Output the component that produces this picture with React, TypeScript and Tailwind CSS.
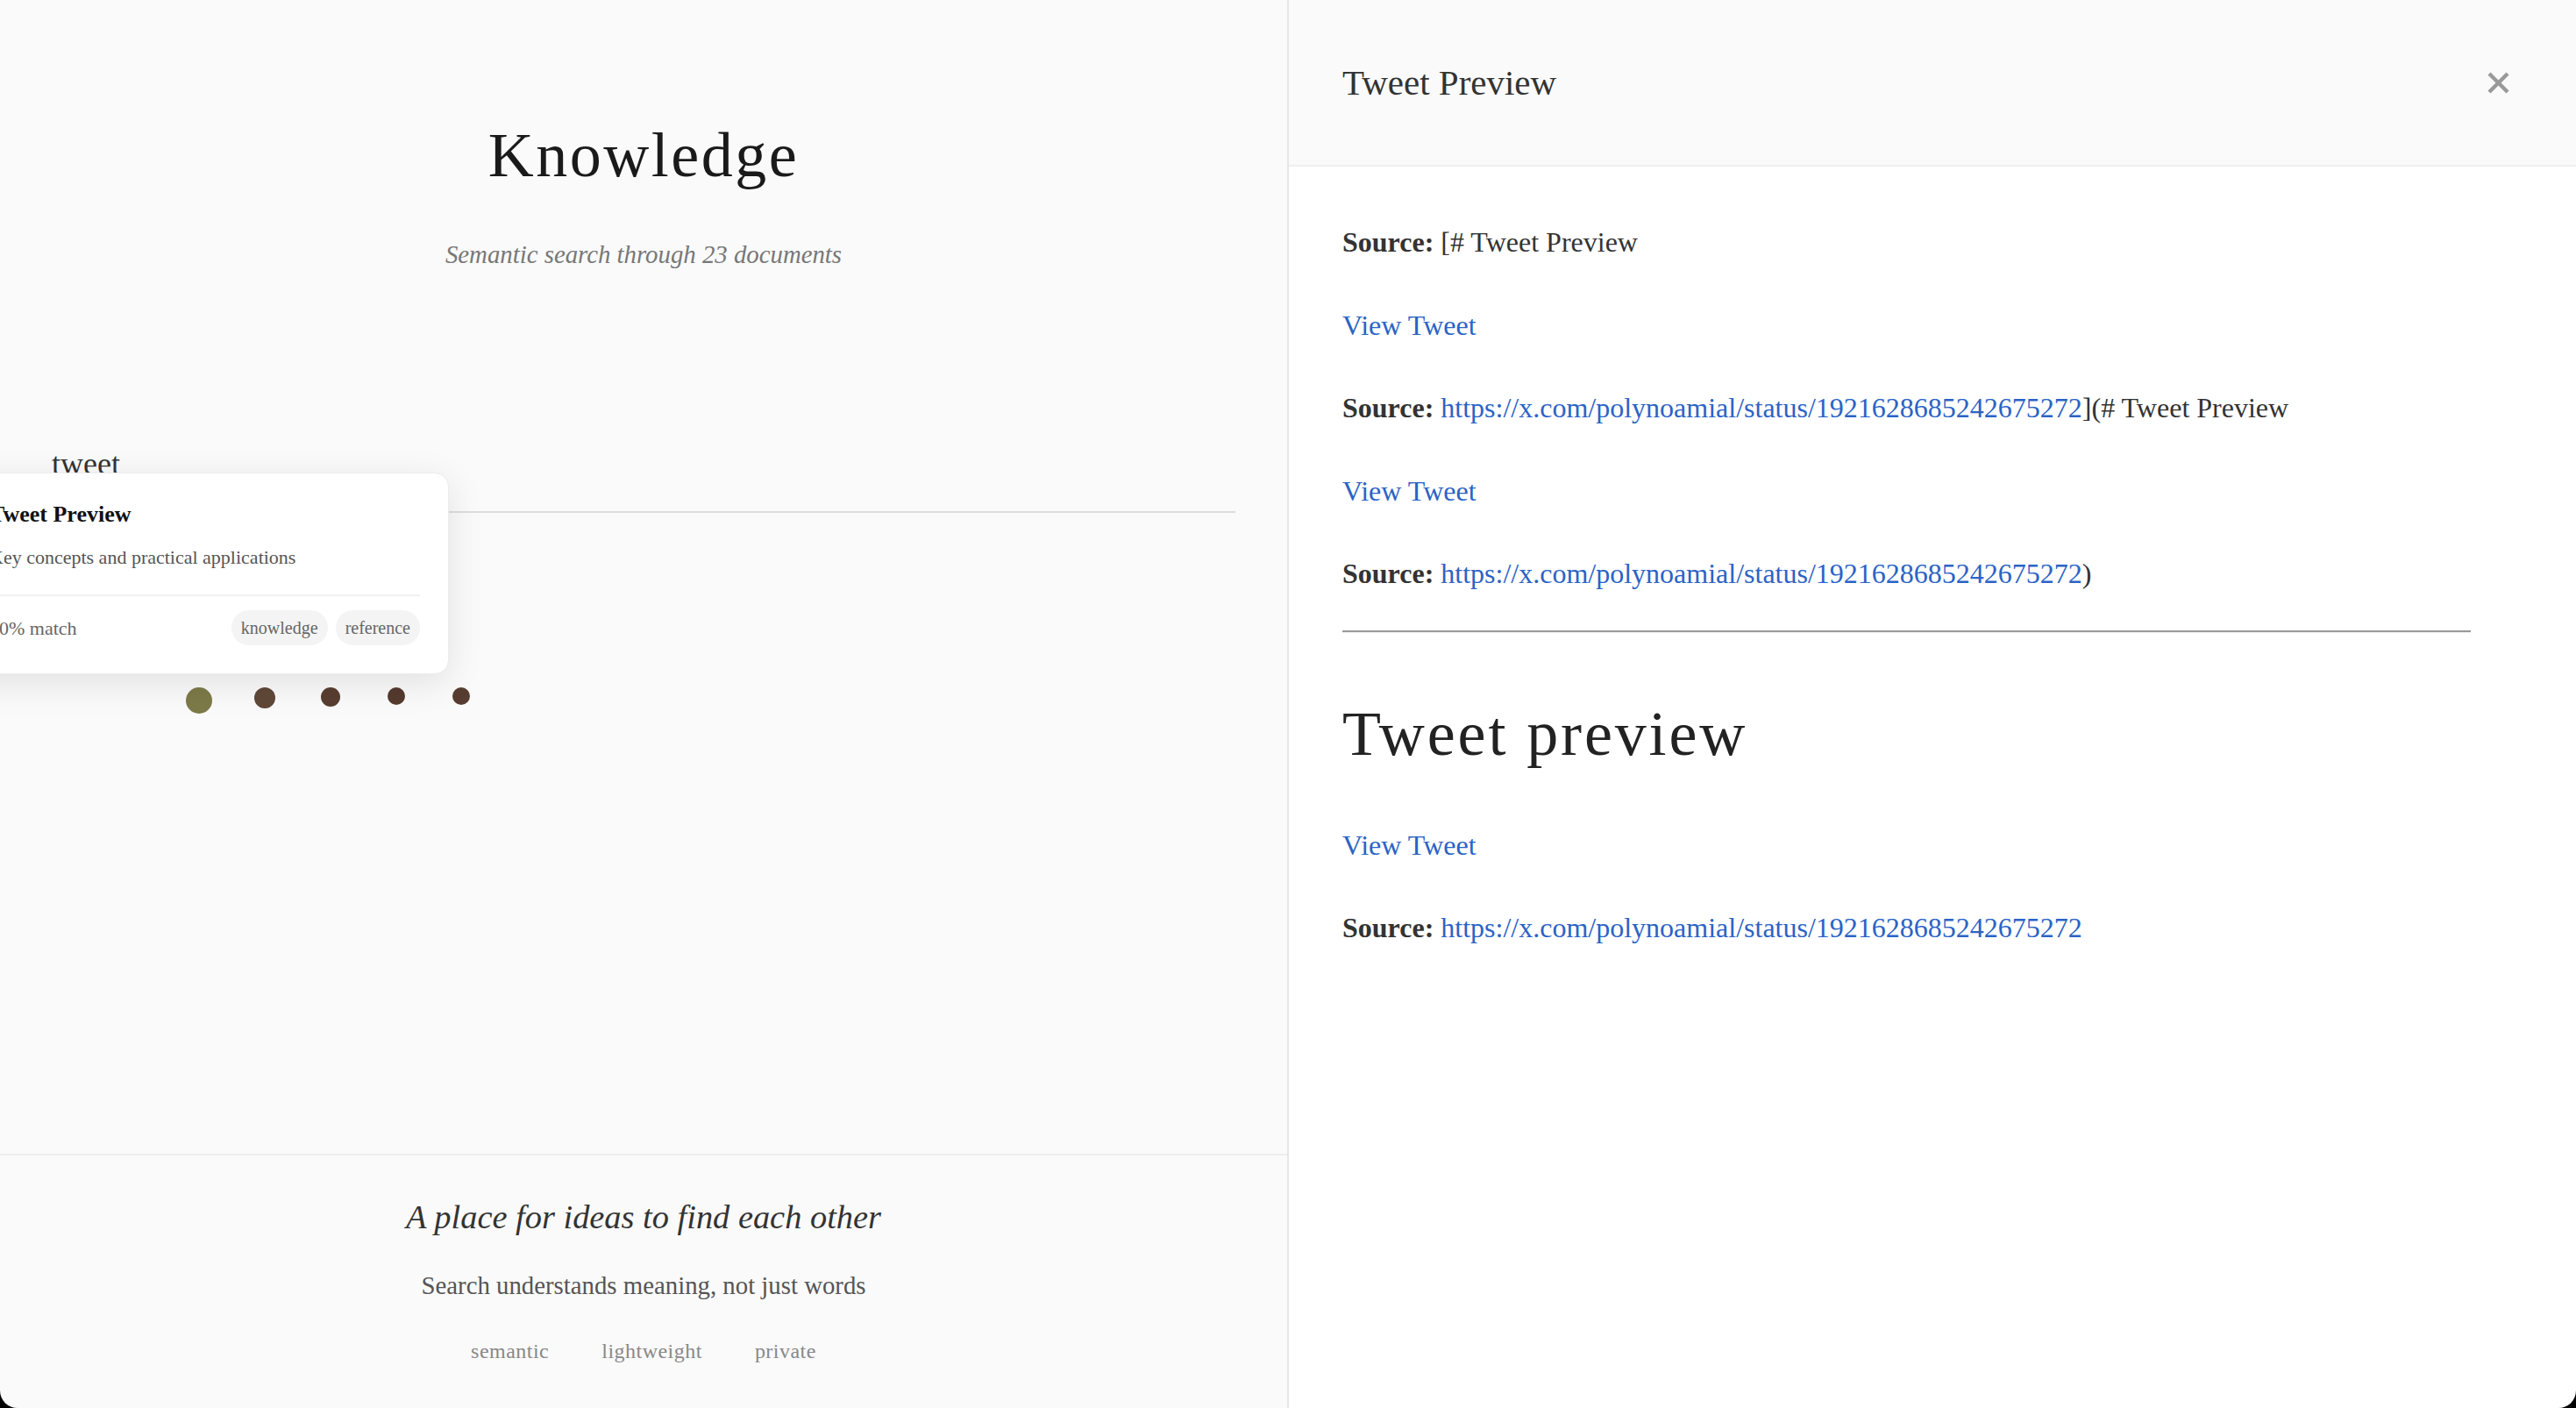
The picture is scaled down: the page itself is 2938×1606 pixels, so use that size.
import React from "react";

const dots = [
  { size: 30, color: "#7c7a48" },
  { size: 24, color: "#5f4838" },
  { size: 22, color: "#583e30" },
  { size: 20, color: "#553a2e" },
  { size: 20, color: "#573d31" },
];

const URL = "https://x.com/polynoamial/status/1921628685242675272";

function Link({ children }: { children: React.ReactNode }) {
  return <a className="text-[#2b63c6] no-underline">{children}</a>;
}

function Source({ children }: { children: React.ReactNode }) {
  return (
    <>
      <strong className="font-bold">Source:</strong> {children}
    </>
  );
}

export default function App() {
  return (
    <div className="h-screen w-full bg-black font-['Liberation_Serif','Times_New_Roman',serif]">
      <div className="flex h-full w-full overflow-hidden rounded-b-[20px]">
        {/* Left panel */}
        <section className="relative flex h-full w-[1470px] shrink-0 flex-col border-r-2 border-[#e6e6e6] bg-[#fafafa]">
          <div className="flex-1 pt-[136px]">
            <h1 className="text-center text-[72px] font-normal leading-[83px] tracking-[0.035em] text-[#1a1a1a]">
              Knowledge
            </h1>
            <p className="mt-[55px] text-center text-[28.8px] italic leading-[33px] text-[#777777]">
              Semantic search through 23 documents
            </p>
            <div className="mx-[59px] mt-[202px]">
              <div className="border-b-2 border-[#dddddd] pb-[33px] text-[36px] leading-[41px] text-[#333333]">
                tweet
              </div>
              <div className="ml-[131px] mt-[199px] flex items-start">
                {dots.map((d, i) => (
                  <div key={i} className="flex w-[74.75px] justify-center">
                    <span
                      className="block rounded-full"
                      style={{ width: d.size, height: d.size, backgroundColor: d.color }}
                    />
                  </div>
                ))}
              </div>
            </div>
          </div>

          <footer className="border-t-2 border-[#eeeeee] pb-[51px] pt-[48px] text-center">
            <p className="text-[38.4px] italic leading-[44px] text-[#333333]">
              A place for ideas to find each other
            </p>
            <p className="mt-[40px] text-[28.8px] leading-[33px] text-[#555555]">
              Search understands meaning, not just words
            </p>
            <div className="mt-[44px] flex justify-center gap-[60px] text-[24px] leading-[28px] tracking-[0.02em] text-[#888888]">
              <span>semantic</span>
              <span>lightweight</span>
              <span>private</span>
            </div>
          </footer>

          {/* Hover preview card */}
          <div className="absolute left-[-45px] top-[539px] w-[557px] rounded-[16px] border border-[#ececec] bg-white p-[32px] shadow-[0_10px_40px_rgba(0,0,0,0.10)]">
            <div className="text-[26px] font-bold leading-[30px] text-[#111111]">Tweet Preview</div>
            <div className="mt-[21px] text-[22px] leading-[25px] text-[#555555]">
              Key concepts and practical applications
            </div>
            <div className="mt-[30px] flex items-center justify-between border-t-2 border-[#f0f0f0] pt-[16px]">
              <span className="text-[22px] leading-[25px] text-[#666666]">40% match</span>
              <div className="flex gap-[9px]">
                <span className="flex h-[40px] items-center rounded-full bg-[#f4f4f4] px-[11px] text-[20px] text-[#666666]">
                  knowledge
                </span>
                <span className="flex h-[40px] items-center rounded-full bg-[#f4f4f4] px-[11px] text-[20px] text-[#666666]">
                  reference
                </span>
              </div>
            </div>
          </div>
        </section>

        {/* Right panel */}
        <section className="flex h-full flex-1 flex-col bg-white">
          <header className="flex h-[190px] shrink-0 items-center justify-between border-b-2 border-[#eeeeee] bg-[#fafafa] pl-[61px] pr-[76px]">
            <h2 className="text-[41px] font-normal leading-[46px] text-[#333333]">Tweet Preview</h2>
            <button className="flex h-[25px] w-[25px] items-center justify-center">
              <svg width="25" height="25" viewBox="0 0 25 25">
                <line x1="2" y1="2" x2="23" y2="23" stroke="#999999" strokeWidth="4.5" />
                <line x1="23" y1="2" x2="2" y2="23" stroke="#999999" strokeWidth="4.5" />
              </svg>
            </button>
          </header>
          <div className="pl-[61px] pt-[61px]">
            <div className="w-[1287px] text-[32px] leading-[51px] text-[#333333]">
              <p className="mb-[43.5px]">
                <Source>[# Tweet Preview</Source>
              </p>
              <p className="mb-[43.5px]">
                <Link>View Tweet</Link>
              </p>
              <p className="mb-[43.5px]">
                <Source>
                  <Link>{URL}</Link>](# Tweet Preview
                </Source>
              </p>
              <p className="mb-[43.5px]">
                <Link>View Tweet</Link>
              </p>
              <p>
                <Source>
                  <Link>{URL}</Link>)
                </Source>
              </p>
              <div className="mt-[39px] h-0 border-b border-t-2 border-b-[#eeeeee] border-t-[#9a9a9a]" />
              <h1 className="mt-[72px] text-[72px] font-normal leading-[86px] tracking-[0.04em] text-[#222222]">
                Tweet preview
              </h1>
              <p className="mt-[58.5px]">
                <Link>View Tweet</Link>
              </p>
              <p className="mt-[43.5px]">
                <Source>
                  <Link>{URL}</Link>
                </Source>
              </p>
            </div>
          </div>
        </section>
      </div>
    </div>
  );
}
